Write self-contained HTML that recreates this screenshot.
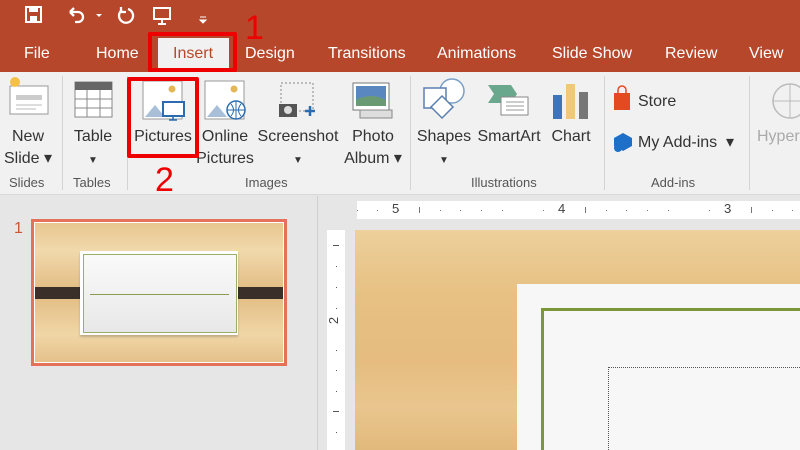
<!DOCTYPE html>
<html><head><style>
*{margin:0;padding:0;box-sizing:border-box}
body{width:800px;height:450px;overflow:hidden;position:relative;background:#e6e6e6;font-family:"Liberation Sans",sans-serif}
.a{position:absolute}
.tab{position:absolute;top:45px;color:#fff;font-size:16px}
.lbl{position:absolute;font-size:16px;color:#333;text-align:center;line-height:22px}
.grp{position:absolute;top:175px;font-size:13px;color:#555}
.sep{position:absolute;top:76px;width:1px;height:114px;background:#d4d4d4}
</style></head><body>
<div class="a" style="left:0;top:0;width:800px;height:72px;background:#b7472a"></div>
<svg class="a" style="left:24px;top:4px" width="200" height="22" viewBox="0 0 200 22">
<rect x="2" y="3" width="15" height="15" fill="none" stroke="#fff" stroke-width="2"/><rect x="5" y="3" width="9" height="5" fill="#fff"/><rect x="6" y="12" width="7" height="6" fill="#fff"/>
<path d="M46 8 h8 a5 5 0 0 1 0 10 h-3 M46 8 l4 -4 M46 8 l4 4" fill="none" stroke="#fff" stroke-width="2.3"/>
<path d="M72 10 l3 3 l3 -3z" fill="#fff"/>
<path d="M98 6 a7 7 0 1 0 6 -1 M97 3 v5 h5" fill="none" stroke="#fff" stroke-width="2.3"/>
<rect x="130" y="4" width="16" height="11" fill="none" stroke="#fff" stroke-width="2"/><path d="M138 15 v5 M134 20 h8" stroke="#fff" stroke-width="2"/>
<path d="M176 13 h6 M176 16 l3 3 l3 -3z" stroke="#fff" fill="#fff"/>
</svg>
<div class="a" style="left:245px;top:8px;font-size:34px;color:#e00;line-height:40px">1</div>
<div class="a" style="left:158px;top:38px;width:71px;height:34px;background:#f1f1f1"></div>
<div class="tab" style="left:24px">File</div>
<div class="tab" style="left:96px">Home</div>
<div class="tab" style="left:173px;color:#b7472a">Insert</div>
<div class="tab" style="left:245px">Design</div>
<div class="tab" style="left:328px">Transitions</div>
<div class="tab" style="left:437px">Animations</div>
<div class="tab" style="left:552px">Slide Show</div>
<div class="tab" style="left:665px">Review</div>
<div class="tab" style="left:749px">View</div>
<div class="a" style="left:148px;top:32px;width:89px;height:40px;border:4px solid #e00;border-radius:2px"></div>
<div class="a" style="left:0;top:72px;width:800px;height:123px;background:#f1f1f1;border-bottom:1px solid #d8d8d8"></div>
<div class="sep" style="left:62px"></div><div class="sep" style="left:127px"></div><div class="sep" style="left:410px"></div><div class="sep" style="left:604px"></div><div class="sep" style="left:749px"></div>
<svg class="a" style="left:0;top:72px" width="800" height="50" viewBox="0 72 800 50">
<rect x="10" y="86" width="38" height="28" fill="#fff" stroke="#999"/><rect x="16" y="95" width="26" height="5" fill="#ccc"/><path d="M16 105h26M16 109h20" stroke="#bbb"/>
<circle cx="15" cy="82" r="5" fill="#f5c04a"/>
<rect x="75" y="82" width="37" height="35" fill="#fff" stroke="#888"/><rect x="75" y="82" width="37" height="8" fill="#666"/><path d="M75 99h37M75 108h37M87 90v27M100 90v27" stroke="#888"/>
<rect x="143" y="81" width="39" height="38" fill="#fff" stroke="#999"/><circle cx="172" cy="89" r="3.5" fill="#e3b756"/><path d="M145 117 l10 -12 l10 12z" fill="#a9bfd8"/><rect x="163" y="102" width="21" height="14" fill="#fff" stroke="#2b6cb0" stroke-width="2"/><path d="M173 117v3M169 120h8" stroke="#2b6cb0" stroke-width="1.5"/>
<rect x="205" y="81" width="39" height="38" fill="#fff" stroke="#999"/><circle cx="234" cy="89" r="3.5" fill="#e3b756"/><path d="M207 117 l10 -12 l10 12z" fill="#a9bfd8"/><circle cx="236" cy="110" r="9" fill="#fff" stroke="#2b6cb0" stroke-width="1.5"/><path d="M227 110h18M236 101v18M231 104q5 6 0 12M241 104q-5 6 0 12" stroke="#2b6cb0" fill="none"/>
<rect x="281" y="83" width="32" height="28" fill="none" stroke="#888" stroke-dasharray="2 2"/><rect x="279" y="104" width="18" height="13" fill="#555"/><circle cx="288" cy="110" r="4" fill="#ddd"/><path d="M305 111h10M310 106v10" stroke="#2b6cb0" stroke-width="2.5"/>
<rect x="353" y="83" width="36" height="27" fill="#fff" stroke="#777"/><rect x="356" y="86" width="30" height="20" fill="#5b87c0"/><path d="M356 100 q15 -8 30 0 v6 h-30z" fill="#6a9a74"/><rect x="360" y="110" width="32" height="8" fill="#ddd" stroke="#888"/>
<circle cx="452" cy="91" r="12" fill="#fff" stroke="#7aa0c8" stroke-width="1.5"/><rect x="424" y="88" width="22" height="20" fill="#fff" stroke="#5b7fb0" stroke-width="1.5"/><path d="M442 96 l11 11 l-11 11 l-11 -11z" fill="#fff" stroke="#5b7fb0" stroke-width="1.5"/>
<path d="M488 85 h23 l6 9 l-6 9 h-23 l6 -9z" fill="#6aa88e"/><rect x="501" y="97" width="27" height="18" fill="#fff" stroke="#888"/><path d="M506 102h18M506 106h18M506 110h18" stroke="#999"/>
<rect x="553" y="95" width="9" height="24" fill="#3f74b8"/><rect x="566" y="84" width="9" height="35" fill="#efc878"/><rect x="579" y="92" width="9" height="27" fill="#777"/>
<path d="M614 93 h16 v17 h-16z" fill="#e34a1f"/><path d="M618 93 v-3 a4 4 0 0 1 8 0 v3" fill="none" stroke="#e34a1f" stroke-width="1.5"/>
<circle cx="790" cy="101" r="17" fill="none" stroke="#bbb" stroke-width="1.5"/><path d="M773 101h34M790 84v34" stroke="#bbb"/>
</svg>
<svg class="a" style="left:612px;top:132px" width="22" height="22"><path d="M11 1 l9 5 v8 l-9 5 l-9 -5 v-8z" fill="#1e6fc7"/><circle cx="6" cy="16" r="4" fill="#1e6fc7"/></svg>
<div class="lbl" style="left:0;top:126px;width:56px">New<br>Slide ▾</div>
<div class="lbl" style="left:66px;top:126px;width:54px">Table<br><span style="font-size:10px">▼</span></div>
<div class="lbl" style="left:131px;top:126px;width:64px">Pictures</div>
<div class="lbl" style="left:196px;top:126px;width:58px">Online<br>Pictures</div>
<div class="lbl" style="left:256px;top:126px;width:84px">Screenshot<br><span style="font-size:10px">▼</span></div>
<div class="lbl" style="left:338px;top:126px;width:70px">Photo<br>Album ▾</div>
<div class="lbl" style="left:414px;top:126px;width:60px">Shapes<br><span style="font-size:10px">▼</span></div>
<div class="lbl" style="left:474px;top:126px;width:70px">SmartArt</div>
<div class="lbl" style="left:546px;top:126px;width:50px">Chart</div>
<div class="lbl" style="left:638px;top:91px;text-align:left">Store</div>
<div class="lbl" style="left:638px;top:132px;text-align:left">My Add-ins &nbsp;▾</div>
<div class="lbl" style="left:757px;top:126px;color:#aaa;text-align:left">Hyper</div>
<div class="grp" style="left:9px">Slides</div><div class="grp" style="left:73px">Tables</div><div class="grp" style="left:245px">Images</div><div class="grp" style="left:471px">Illustrations</div><div class="grp" style="left:651px">Add-ins</div>
<div class="a" style="left:127px;top:77px;width:72px;height:81px;border:4px solid #e00;border-radius:2px"></div>
<div class="a" style="left:155px;top:160px;font-size:34px;color:#e00;line-height:40px">2</div>
<div class="a" style="left:317px;top:196px;width:1px;height:254px;background:#cfcfcf"></div>
<div class="a" style="left:14px;top:220px;font-size:16px;color:#c9553a">1</div>
<div class="a" style="left:31px;top:219px;width:256px;height:147px;border:3px solid #e4725a;background:linear-gradient(180deg,#e7c58e,#f1d9ac 20%,#e2bb82 50%,#f0d6a6 80%,#e4c08a);outline:1px solid #fff;outline-offset:-4px"></div>
<div class="a" style="left:35px;top:287px;width:50px;height:12px;background:#3a3029"></div>
<div class="a" style="left:233px;top:287px;width:50px;height:12px;background:#3a3029"></div>
<div class="a" style="left:80px;top:251px;width:158px;height:84px;background:#fff;box-shadow:0 2px 2px rgba(0,0,0,.2)"></div>
<div class="a" style="left:83px;top:254px;width:154px;height:79px;border:1px solid #9aae6a;background:linear-gradient(#fafafa,#e8e8e8)"></div>
<div class="a" style="left:90px;top:294px;width:139px;height:1px;background:#8a9c4f"></div>
<div class="a" style="left:357px;top:201px;width:443px;height:18px;background:#fff"></div>
<svg class="a" style="left:357px;top:201px" width="443" height="18">
<g fill="#777"><rect x="62" y="6" width="1" height="6"/><rect x="228" y="6" width="1" height="6"/><rect x="394" y="6" width="1" height="6"/>
<g id="d"><rect x="0" y="9" width="1" height="1"/><rect x="20" y="9" width="1" height="1"/><rect x="41" y="9" width="1" height="1"/><rect x="83" y="9" width="1" height="1"/><rect x="103" y="9" width="1" height="1"/><rect x="124" y="9" width="1" height="1"/><rect x="145" y="9" width="1" height="1"/></g>
<rect x="186" y="9" width="1" height="1"/><rect x="207" y="9" width="1" height="1"/><rect x="249" y="9" width="1" height="1"/><rect x="269" y="9" width="1" height="1"/><rect x="290" y="9" width="1" height="1"/><rect x="311" y="9" width="1" height="1"/><rect x="352" y="9" width="1" height="1"/><rect x="373" y="9" width="1" height="1"/><rect x="415" y="9" width="1" height="1"/><rect x="435" y="9" width="1" height="1"/></g></svg>
<div class="a" style="left:392px;top:201px;font-size:13px;color:#444">5</div>
<div class="a" style="left:558px;top:201px;font-size:13px;color:#444">4</div>
<div class="a" style="left:724px;top:201px;font-size:13px;color:#444">3</div>
<div class="a" style="left:327px;top:230px;width:18px;height:220px;background:#fff"></div>
<svg class="a" style="left:327px;top:230px" width="18" height="220"><g fill="#555"><rect x="6" y="15" width="6" height="1"/><rect x="6" y="181" width="6" height="1"/><rect x="9" y="36" width="1" height="1"/><rect x="9" y="57" width="1" height="1"/><rect x="9" y="78" width="1" height="1"/><rect x="9" y="120" width="1" height="1"/><rect x="9" y="140" width="1" height="1"/><rect x="9" y="161" width="1" height="1"/><rect x="9" y="202" width="1" height="1"/></g></svg>
<div class="a" style="left:330px;top:313px;font-size:13px;color:#444;transform:rotate(-90deg)">2</div>
<div class="a" style="left:355px;top:230px;width:445px;height:220px;background:linear-gradient(180deg,#edd09b,#e7c083 30%,#e6bc80 60%,#e9c68e 80%,#e2b97c)"></div>
<div class="a" style="left:517px;top:284px;width:283px;height:166px;background:#f7f7f7"></div>
<div class="a" style="left:541px;top:308px;width:259px;height:142px;border-left:3px solid #7c963a;border-top:3px solid #7c963a"></div>
<div class="a" style="left:608px;top:367px;width:192px;height:83px;border-left:1px dotted #555;border-top:1px dotted #555"></div>
</body></html>
